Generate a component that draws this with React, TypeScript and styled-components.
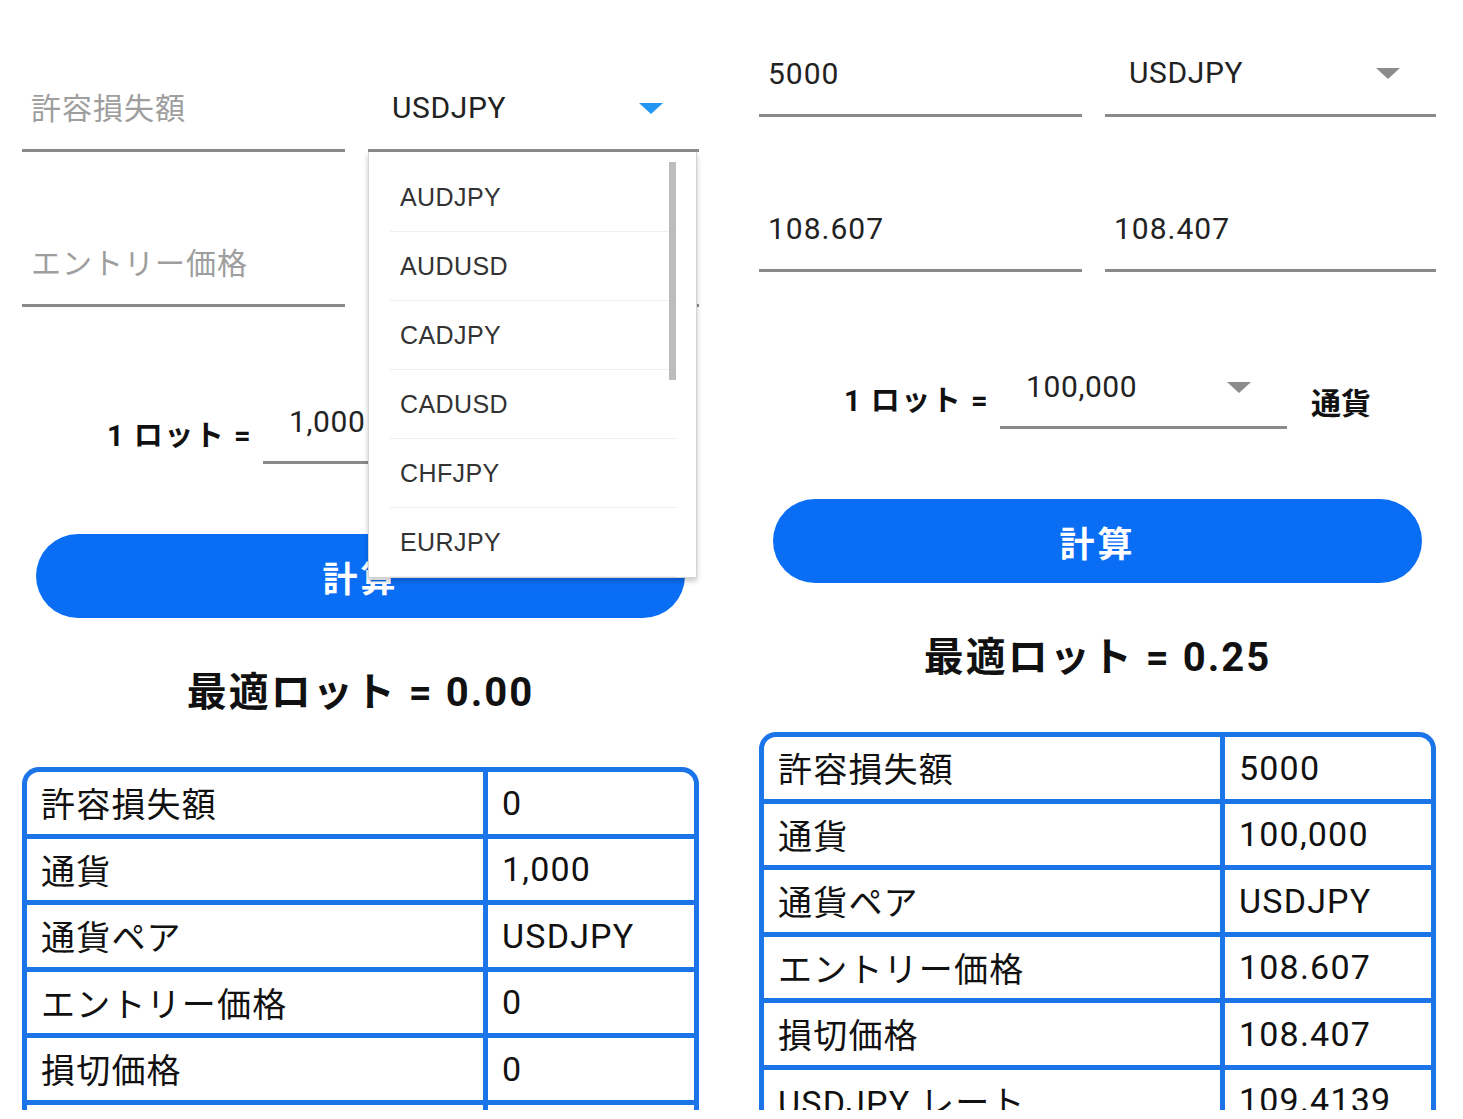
import styled, { createGlobalStyle } from "styled-components";

type Row = { label: string; value: string };

type PanelData = {
  top: number;
  loss: string;
  entry: string;
  stop: string;
  pair: string;
  lot: string;
  result: string;
  open: boolean;
  rows: Row[];
};

const PAIRS = ["AUDJPY", "AUDUSD", "CADJPY", "CADUSD", "CHFJPY", "EURJPY"];

const panels: PanelData[] = [
  {
    top: 88,
    loss: "",
    entry: "",
    stop: "",
    pair: "USDJPY",
    lot: "1,000",
    result: "0.00",
    open: true,
    rows: [
      { label: "許容損失額", value: "0" },
      { label: "通貨", value: "1,000" },
      { label: "通貨ペア", value: "USDJPY" },
      { label: "エントリー価格", value: "0" },
      { label: "損切価格", value: "0" },
      { label: "USDJPY レート", value: "0" },
    ],
  },
  {
    top: 53,
    loss: "5000",
    entry: "108.607",
    stop: "108.407",
    pair: "USDJPY",
    lot: "100,000",
    result: "0.25",
    open: false,
    rows: [
      { label: "許容損失額", value: "5000" },
      { label: "通貨", value: "100,000" },
      { label: "通貨ペア", value: "USDJPY" },
      { label: "エントリー価格", value: "108.607" },
      { label: "損切価格", value: "108.407" },
      { label: "USDJPY レート", value: "109.4139" },
    ],
  },
];

const GlobalStyle = createGlobalStyle`
  html, body {
    margin: 0;
    padding: 0;
    background: #ffffff;
  }
  body {
    font-family: Roboto, "Noto Sans CJK JP", sans-serif;
    color: #111;
  }
`;

const Page = styled.div`
  display: flex;
  align-items: flex-start;
  gap: 60px;
  width: 1463px;
  height: 1110px;
  padding-left: 22px;
  box-sizing: border-box;
  overflow: hidden;
`;

const Panel = styled.section<{ $top: number }>`
  flex: none;
  width: 677px;
  padding-top: ${(p) => p.$top}px;
  display: flex;
  flex-direction: column;
  & > * {
    flex-shrink: 0;
  }
`;

const FieldGrid = styled.div`
  display: grid;
  grid-template-columns: 323px 1fr;
  column-gap: 23px;
  row-gap: 91px;
`;

const TextField = styled.input`
  display: block;
  width: 100%;
  height: 64px;
  box-sizing: border-box;
  padding: 0 0 21px 9px;
  border: none;
  border-bottom: 3px solid #8a8a8a;
  background: transparent;
  outline: none;
  font: 400 30px/40px Roboto, "Noto Sans CJK JP", sans-serif;
  letter-spacing: 1px;
  color: #222;
  &::placeholder {
    color: #9e9e9e;
  }
`;

const SelectBox = styled.div<{ $pad: number; $width?: number }>`
  position: relative;
  ${(p) => (p.$width ? `width: ${p.$width}px; flex: none;` : "")}
  height: ${(p) => (p.$width ? 62 : 64)}px;
  box-sizing: border-box;
  padding: 0 36px ${(p) => (p.$width ? 19 : 21)}px ${(p) => p.$pad}px;
  border-bottom: 3px solid #8a8a8a;
  display: flex;
  align-items: center;
  justify-content: space-between;
`;

const SelectValue = styled.span`
  font: 400 30px/40px Roboto, "Noto Sans CJK JP", sans-serif;
  letter-spacing: 0.6px;
  color: #222;
`;

const Caret = styled.span<{ $active: boolean }>`
  width: 0;
  height: 0;
  border-left: 12px solid transparent;
  border-right: 12px solid transparent;
  border-top: 11px solid ${(p) => (p.$active ? "#2196f3" : "#8c8c8c")};
`;

const Popup = styled.div`
  position: absolute;
  top: calc(100% + 3px);
  left: 0;
  right: 2px;
  height: 426px;
  box-sizing: border-box;
  padding-top: 11px;
  background: #fff;
  border: 1px solid #d4d4d4;
  border-top: none;
  box-shadow: 0 3px 5px rgba(0, 0, 0, 0.22);
  z-index: 10;
`;

const Option = styled.div`
  height: 69px;
  box-sizing: border-box;
  margin: 0 19px 0 21px;
  padding-left: 10px;
  display: flex;
  align-items: center;
  border-bottom: 1px solid #efefef;
  font: 400 25px "Liberation Sans", Arial, sans-serif;
  letter-spacing: 0.4px;
  color: #333;
  &:last-child {
    border-bottom: none;
  }
`;

const ScrollThumb = styled.div`
  position: absolute;
  top: 10px;
  right: 20px;
  width: 7px;
  height: 218px;
  background: #bdbdbd;
`;

const LotRow = styled.div`
  display: flex;
  align-items: center;
  margin-top: 95px;
  padding-left: 85px;
`;

const LotLabel = styled.span`
  flex: none;
  width: 156px;
  margin-top: 6px;
  white-space: nowrap;
  font: 700 29px/40px Roboto, "Noto Sans CJK JP", sans-serif;
  letter-spacing: 1.5px;
  color: #111;
`;

const Unit = styled.span`
  margin-left: 24px;
  margin-top: 6px;
  font: 700 30px/40px "Noto Sans CJK JP", sans-serif;
  color: #111;
`;

const CalcButton = styled.button`
  margin: 70px 14px 0;
  height: 84px;
  border: none;
  border-radius: 42px;
  background: #0a6ef5;
  color: #fff;
  font: 700 35px "Noto Sans CJK JP", sans-serif;
  letter-spacing: 3px;
  cursor: pointer;
`;

const Result = styled.div`
  margin-top: 50px;
  text-align: center;
  font: 700 40px/50px Roboto, "Noto Sans CJK JP", sans-serif;
  letter-spacing: 2px;
  color: #111;
`;

const Table = styled.div`
  margin-top: 49px;
  display: grid;
  grid-template-columns: 461px 1fr;
  border: 5px solid #1c74e9;
  border-bottom: none;
  border-radius: 17px 17px 0 0;
  overflow: hidden;
`;

const Cell = styled.div<{ $label?: boolean }>`
  height: 66.5px;
  box-sizing: border-box;
  padding: 0 14px;
  display: flex;
  align-items: center;
  border-bottom: 5px solid #1c74e9;
  ${(p) => (p.$label ? "border-right: 5px solid #1c74e9;" : "")}
  font: 400 34px Roboto, "Noto Sans CJK JP", sans-serif;
  letter-spacing: 1.2px;
  color: #111;
  white-space: nowrap;
`;

function Calculator({ data }: { data: PanelData }) {
  return (
    <Panel $top={data.top}>
      <FieldGrid>
        <TextField placeholder="許容損失額" defaultValue={data.loss} readOnly />
        <SelectBox $pad={24}>
          <SelectValue>{data.pair}</SelectValue>
          <Caret $active={data.open} />
          {data.open && (
            <Popup>
              {PAIRS.map((p) => (
                <Option key={p}>{p}</Option>
              ))}
              <ScrollThumb />
            </Popup>
          )}
        </SelectBox>
        <TextField placeholder="エントリー価格" defaultValue={data.entry} readOnly />
        <TextField placeholder="損切価格" defaultValue={data.stop} readOnly />
      </FieldGrid>
      <LotRow>
        <LotLabel>1 ロット =</LotLabel>
        <SelectBox $pad={26} $width={287}>
          <SelectValue>{data.lot}</SelectValue>
          <Caret $active={false} />
        </SelectBox>
        <Unit>通貨</Unit>
      </LotRow>
      <CalcButton>計算</CalcButton>
      <Result>最適ロット = {data.result}</Result>
      <Table>
        {data.rows.flatMap((r) => [
          <Cell $label key={r.label}>
            {r.label}
          </Cell>,
          <Cell key={r.label + "-v"}>{r.value}</Cell>,
        ])}
      </Table>
    </Panel>
  );
}

export default function App() {
  return (
    <>
      <GlobalStyle />
      <Page>
        {panels.map((p, i) => (
          <Calculator key={i} data={p} />
        ))}
      </Page>
    </>
  );
}
